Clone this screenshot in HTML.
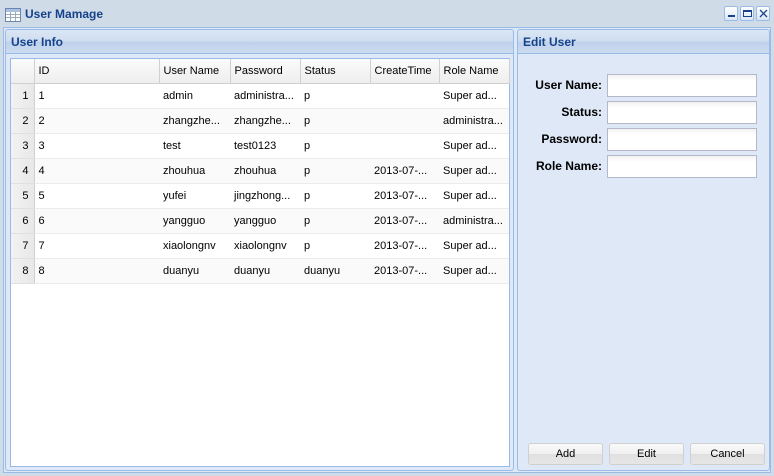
<!DOCTYPE html>
<html><head><meta charset="utf-8"><style>
*{box-sizing:border-box;margin:0;padding:0}
body{width:774px;height:476px;background:#cfdbe7;font-family:"Liberation Sans",Tahoma,sans-serif;font-size:11px;position:relative;overflow:hidden;color:#000}
.abs{position:absolute}
.title{left:25px;top:7px;font-weight:bold;font-size:12px;color:#15428b}
.tb{top:6px;width:14px;height:15px;border:1px solid #99bbe8;border-radius:2px;background:linear-gradient(#fff,#dbe6f5);}
.win{left:3px;top:27px;width:768px;height:446px;border:1px solid #99bbe8;background:#dfe8f6}
.panel{border:1px solid #99bbe8;border-radius:3px;background:#dfe8f6}
.ph{height:24px;background:linear-gradient(#dae6f4 0,#d0def0 45%,#c0d2ec 55%,#ccdbf0 100%);border-bottom:1px solid #99bbe8;font-weight:bold;font-size:12px;color:#15428b;padding:5px 0 0 5px;border-radius:3px 3px 0 0}
.grid{left:10px;top:58px;width:500px;height:409px;border:1px solid #99bbe8;background:#fff}
table{border-collapse:collapse;position:absolute;left:0;top:0;table-layout:fixed;width:498px}
td,th{height:25px;white-space:nowrap;overflow:hidden;font-weight:normal;text-align:left;padding-left:4px;font-size:11px}
th{background:linear-gradient(#fbfbfb,#eeeeee);border-right:1px solid #d0d0d0;border-bottom:1px solid #d0d0d0;height:24px}
td{border-bottom:1px solid #ececec}
td.rn{background:linear-gradient(90deg,#f2f2f2,#e8e8e8);text-align:right;padding-right:5px;border-right:1px solid #d0d0d0;border-bottom:1px solid #e0e0e0}
tr.alt td{background:#fafafa}
tr.alt td.rn{background:linear-gradient(90deg,#f2f2f2,#e8e8e8)}
.lbl{font-weight:bold;font-size:12px;text-align:right;width:90px;left:512px}
.inp{left:607px;width:150px;height:23px;border:1px solid #b5b8c8;background:linear-gradient(#f2f2f2,#fff 6px)}
.btn{top:443px;width:75px;height:22px;border:1px solid #d0d0d0;border-radius:3px;background:linear-gradient(#fafafa 0,#f0f0f0 50%,#e0e0e0 51%,#e6e6e6);text-align:center;line-height:20px;font-size:11px}
</style></head><body>
<svg class="abs" style="left:5px;top:8px" width="16" height="14" viewBox="0 0 16 14"><rect x="0.5" y="0.5" width="15" height="13" fill="#fff" stroke="#6b86b0"/><rect x="1" y="1" width="14" height="3" fill="#a9c0e0"/><path d="M1 6.5H15M1 9.5H15M5.5 4V13M10.5 4V13" stroke="#9ab" stroke-width="1"/></svg>
<div class="abs title">User Mamage</div>
<div class="abs tb" style="left:724px"><div class="abs" style="left:3px;top:8px;width:7px;height:2px;background:#15428b"></div></div>
<div class="abs tb" style="left:740px"><div class="abs" style="left:2px;top:3px;width:9px;height:7px;border:1px solid #15428b;border-top-width:2px"></div></div>
<div class="abs tb" style="left:756px"><svg class="abs" style="left:2px;top:2px" width="9" height="9"><path d="M1 1L8 8M8 1L1 8" stroke="#15428b" stroke-width="1.3"/></svg></div>
<div class="abs win"></div>
<div class="abs panel" style="left:5px;top:29px;width:509px;height:442px"><div class="ph">User Info</div></div>
<div class="abs panel" style="left:517px;top:29px;width:253px;height:442px"><div class="ph">Edit User</div></div>
<div class="abs grid">
<table>
<colgroup><col style="width:23px"><col style="width:125px"><col style="width:71px"><col style="width:70px"><col style="width:70px"><col style="width:69px"><col style="width:70px"></colgroup>
<tr><th style="padding:0"></th><th>ID</th><th>User Name</th><th>Password</th><th>Status</th><th>CreateTime</th><th>Role Name</th></tr>
<tr><td class="rn">1</td><td>1</td><td>admin</td><td>administra...</td><td>p</td><td></td><td>Super ad...</td></tr>
<tr class="alt"><td class="rn">2</td><td>2</td><td>zhangzhe...</td><td>zhangzhe...</td><td>p</td><td></td><td>administra...</td></tr>
<tr><td class="rn">3</td><td>3</td><td>test</td><td>test0123</td><td>p</td><td></td><td>Super ad...</td></tr>
<tr class="alt"><td class="rn">4</td><td>4</td><td>zhouhua</td><td>zhouhua</td><td>p</td><td>2013-07-...</td><td>Super ad...</td></tr>
<tr><td class="rn">5</td><td>5</td><td>yufei</td><td>jingzhong...</td><td>p</td><td>2013-07-...</td><td>Super ad...</td></tr>
<tr class="alt"><td class="rn">6</td><td>6</td><td>yangguo</td><td>yangguo</td><td>p</td><td>2013-07-...</td><td>administra...</td></tr>
<tr><td class="rn">7</td><td>7</td><td>xiaolongnv</td><td>xiaolongnv</td><td>p</td><td>2013-07-...</td><td>Super ad...</td></tr>
<tr class="alt"><td class="rn">8</td><td>8</td><td>duanyu</td><td>duanyu</td><td>duanyu</td><td>2013-07-...</td><td>Super ad...</td></tr>
</table></div>
<div class="abs lbl" style="top:78px">User Name:</div>
<div class="abs lbl" style="top:105px">Status:</div>
<div class="abs lbl" style="top:132px">Password:</div>
<div class="abs lbl" style="top:159px">Role Name:</div>
<div class="abs inp" style="top:74px"></div>
<div class="abs inp" style="top:101px"></div>
<div class="abs inp" style="top:128px"></div>
<div class="abs inp" style="top:155px"></div>
<div class="abs btn" style="left:528px">Add</div>
<div class="abs btn" style="left:609px">Edit</div>
<div class="abs btn" style="left:690px">Cancel</div>
</body></html>
